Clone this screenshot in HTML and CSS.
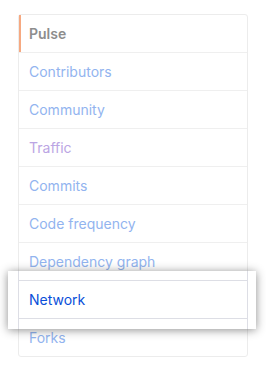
FILE: index.html
```html
<!DOCTYPE html>
<html>
<head>
<meta charset="utf-8">
<title>Insights</title>
<link rel="stylesheet" href="styles.css">
</head>
<body>
<!-- 仓库洞察侧栏 -->
<nav class="menu">
    <a href="#" class="menu-item selected">Pulse</a>
    <a href="#" class="menu-item">Contributors</a>
    <a href="#" class="menu-item">Community</a>
    <a href="#" class="menu-item visited">Traffic</a>
    <a href="#" class="menu-item">Commits</a>
    <a href="#" class="menu-item">Code frequency</a>
    <a href="#" class="menu-item">Dependency graph</a>
    <a href="#" class="menu-item focus">Network</a>
    <a href="#" class="menu-item">Forks</a>
</nav>
</body>
</html>
```

FILE: styles.css
```css
body{margin:0;background:#fff;font-family:Inter,"Liberation Sans",sans-serif;}
.menu{margin:14px 0 0 18px;width:228px;border:1px solid #ececec;border-radius:3px;background:#fff;}
.menu-item{display:block;position:relative;padding:8px 10px;line-height:21px;font-size:14px;color:#92b4ef;text-decoration:none;border-top:1px solid #efefef;}
.menu-item:first-child{border-top:0;}
.menu-item.selected{padding-left:8px;border-left:2px solid #f6a981;font-weight:600;color:#8d8d8d;}
.menu-item.visited{color:#bba5e4;}
/* 高亮的那一行 */
.menu-item.focus{z-index:1;color:#0a4fd9;}
.menu-item.focus:before{content:"";position:absolute;z-index:-1;top:-10px;left:-11px;width:248px;height:58px;
    background:
        linear-gradient(#dddee5,#dddee5) 10px 9px/230px 1px no-repeat,
        linear-gradient(#dddee5,#dddee5) 10px 47px/230px 1px no-repeat,
        linear-gradient(#dddee5,#dddee5) 10px 0/1px 58px no-repeat,
        linear-gradient(#dddee5,#dddee5) 239px 0/1px 58px no-repeat,
        #fff;
    box-shadow:0 1px 9px rgba(0,0,0,.45);}
```
